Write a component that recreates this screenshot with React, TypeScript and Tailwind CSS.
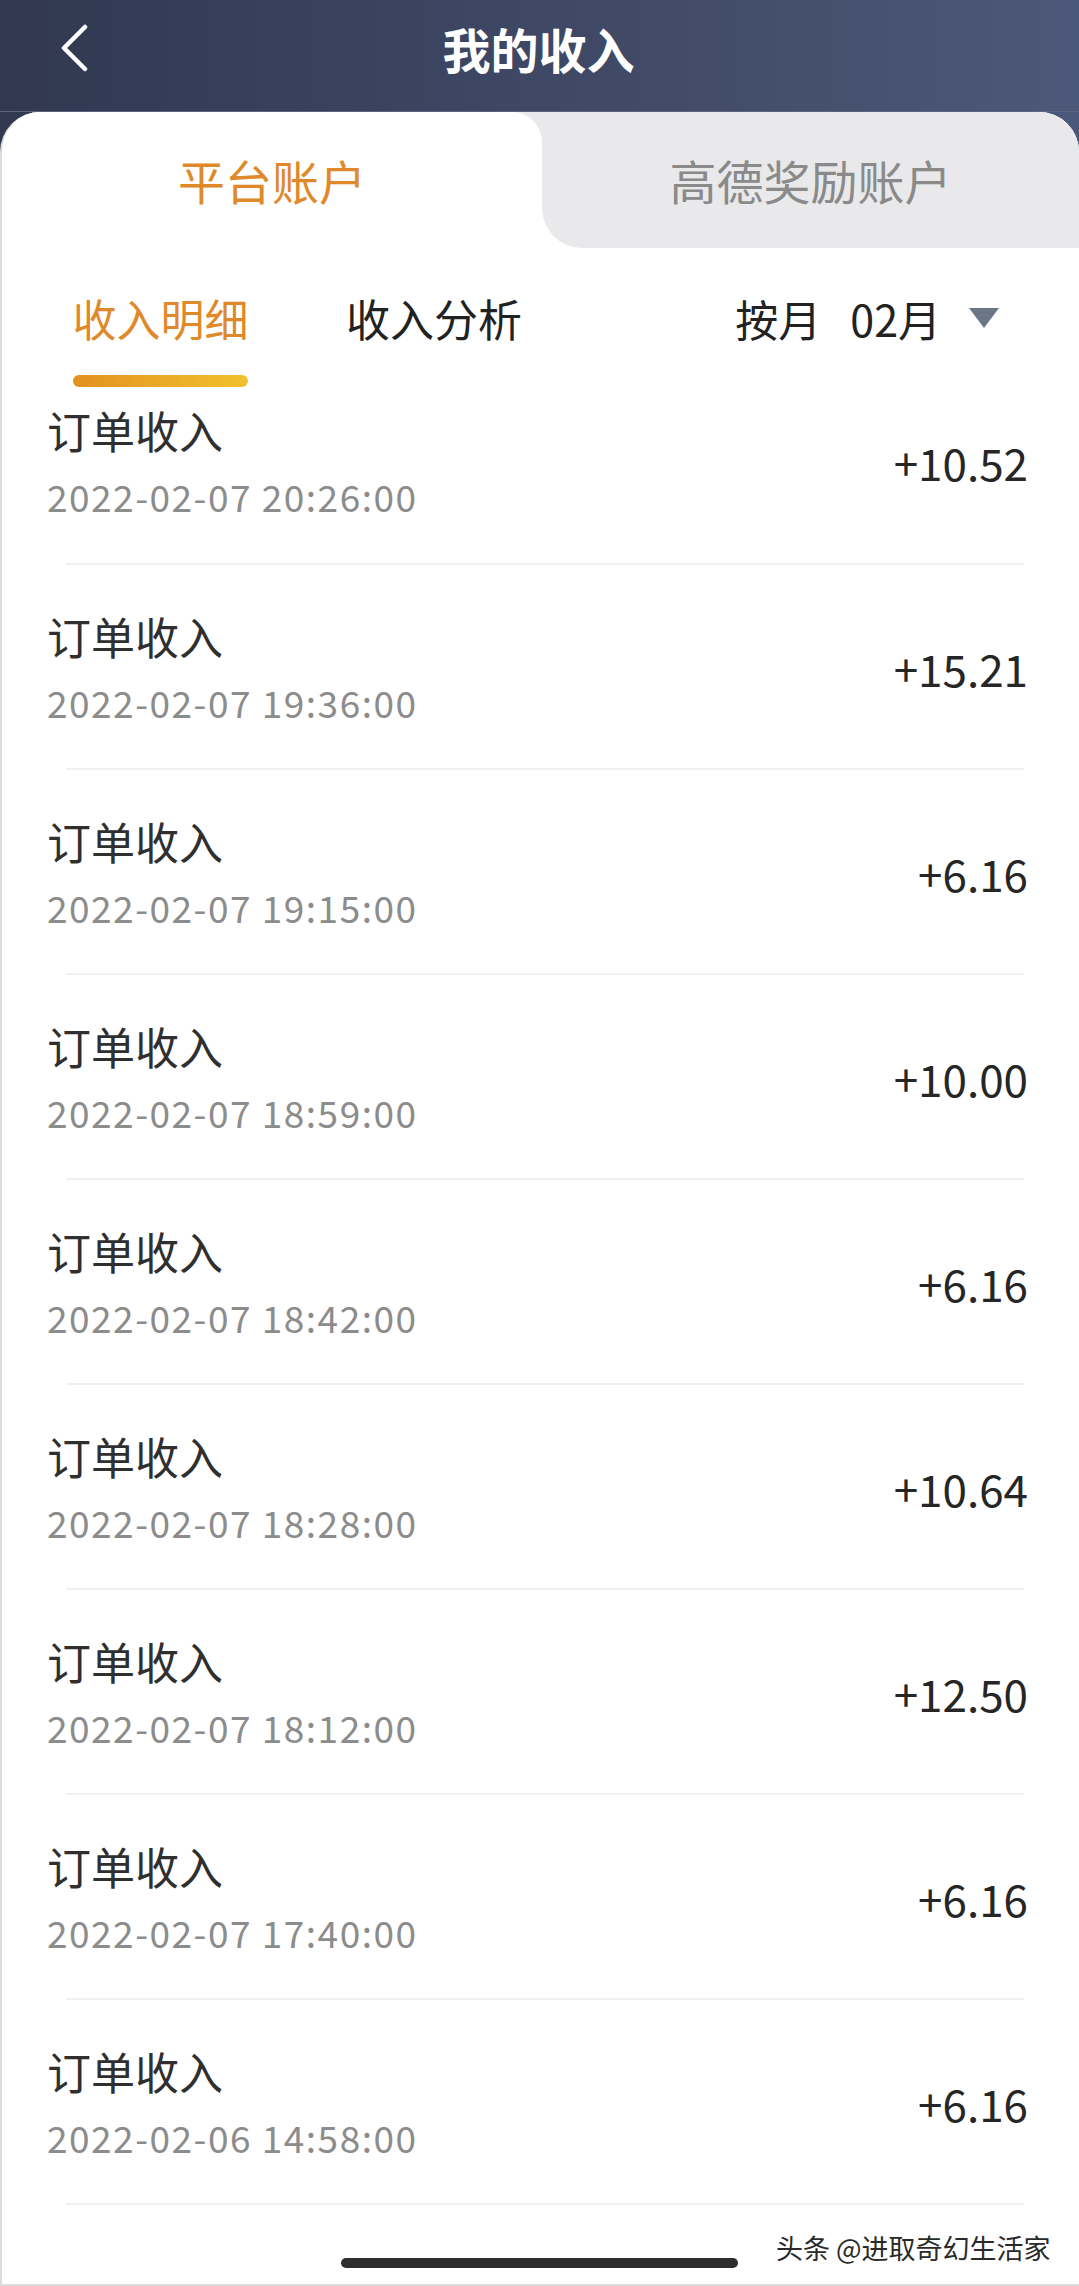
import React from "react";

const rows = [
  { time: "2022-02-07 20:26:00", amount: "+10.52" },
  { time: "2022-02-07 19:36:00", amount: "+15.21" },
  { time: "2022-02-07 19:15:00", amount: "+6.16" },
  { time: "2022-02-07 18:59:00", amount: "+10.00" },
  { time: "2022-02-07 18:42:00", amount: "+6.16" },
  { time: "2022-02-07 18:28:00", amount: "+10.64" },
  { time: "2022-02-07 18:12:00", amount: "+12.50" },
  { time: "2022-02-07 17:40:00", amount: "+6.16" },
  { time: "2022-02-06 14:58:00", amount: "+6.16" },
];

const font = "font-['Noto_Sans_CJK_SC','Noto_Sans',sans-serif]";

function IncomeRow({ time, amount, first }: { time: string; amount: string; first?: boolean }) {
  return (
    <div>
      <div
        className={
          first
            ? "h-[175px] pb-[27px] pl-[45px] pr-[51px] flex items-center justify-between"
            : "h-[203px] pt-[2px] pl-[45px] pr-[51px] flex items-center justify-between"
        }
      >
        <div className="flex flex-col">
          <span className="text-[44px] leading-[44px] text-[#2f2f2f]">订单收入</span>
          <span className="mt-[24px] text-[37px] leading-[40px] text-[#8c8c8c] tracking-[1.5px]">{time}</span>
        </div>
        <span className="text-[44px] leading-[48px] text-[#262626]">{amount}</span>
      </div>
      <div className="h-[2px] ml-[64px] mr-[55px] bg-[#f1f1f1]" />
    </div>
  );
}

export default function App() {
  return (
    <div className={`relative w-[1079px] h-[2286px] overflow-hidden flex flex-col bg-gradient-to-r from-[#313850] to-[#4c5879] ${font}`}>
      {/* header */}
      <div className="h-[112px] shrink-0 flex items-center justify-between px-[62px] pb-[16px] border-b border-[#5a6380]">
        <svg width="30" height="48" viewBox="0 0 30 48" className="-ml-[2px]">
          <polyline points="25,3 4,24 25,45" fill="none" stroke="#fff" strokeWidth="4.5" strokeLinecap="round" strokeLinejoin="round" />
        </svg>
        <span className="text-[48px] leading-[56px] font-bold text-white">我的收入</span>
        <div className="w-[30px]" />
      </div>

      {/* card */}
      <div className="flex-1 bg-white rounded-t-[40px] overflow-hidden border-l-2 border-[#dcdcdc] flex flex-col">
        {/* account tabs */}
        <div className="h-[136px] shrink-0 flex">
          <div className="w-[540px] bg-[#e9e9eb]">
            <div className="h-full bg-white rounded-tr-[30px] flex items-center justify-center text-[47px] text-[#e0892a]">
              平台账户
            </div>
          </div>
          <div className="flex-1 bg-white">
            <div className="h-full bg-[#e9e9eb] rounded-bl-[40px] flex items-center justify-center text-[47px] text-[#8a8a8a]">
              高德奖励账户
            </div>
          </div>
        </div>

        {/* sub tabs */}
        <div className="h-[140px] shrink-0 flex items-start pl-[71px] pr-[80px] pt-[48px] whitespace-nowrap">
          <div className="w-[175px] shrink-0 flex flex-col items-center">
            <span className="text-[44px] leading-[44px] text-[#e0892a]">收入明细</span>
            <div className="mt-[35px] w-[175px] h-[12px] rounded-full bg-gradient-to-r from-[#e2911f] to-[#f2c12e]" />
          </div>
          <span className="ml-[98px] text-[44px] leading-[44px] text-[#222]">收入分析</span>
          <div className="ml-auto flex items-center">
            <span className="text-[43px] leading-[44px] text-[#222]">按月</span>
            <span className="ml-[29px] text-[43px] leading-[44px] text-[#222]">02月</span>
            <svg width="30" height="20" viewBox="0 0 30 20" className="ml-[28px]">
              <polygon points="0,0 30,0 15,20" fill="#6b7687" />
            </svg>
          </div>
        </div>

        {/* list */}
        <div className="flex flex-col">
          {rows.map((r, i) => (
            <IncomeRow key={i} time={r.time} amount={r.amount} first={i === 0} />
          ))}
        </div>
      </div>

      {/* watermark + home indicator */}
      <span className="absolute left-[776px] top-[2230px] text-[27px] leading-[36px] text-[#2a2a2a] [text-shadow:0_0_2px_#fff]">
        头条 @进取奇幻生活家
      </span>
      <div className="absolute left-[341px] top-[2258px] w-[397px] h-[10px] rounded-full bg-[#2e2e2e]" />
      <div className="absolute left-0 right-0 bottom-0 h-[2px] bg-[#dcdcdc]" />
    </div>
  );
}
